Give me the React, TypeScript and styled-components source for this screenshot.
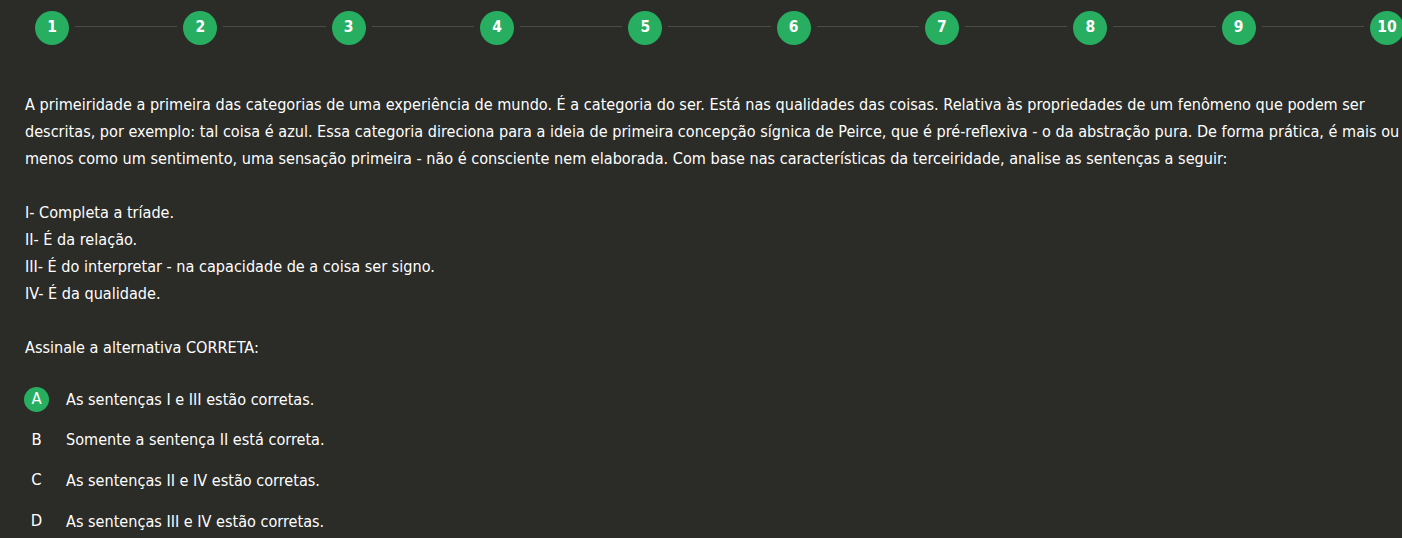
import React from "react";
import styled, { createGlobalStyle } from "styled-components";

const GlobalStyle = createGlobalStyle`
  html, body {
    margin: 0;
    padding: 0;
    background: #2b2b27;
    overflow: hidden;
  }
  body {
    font-family: "DejaVu Sans Condensed", "DejaVu Sans", sans-serif;
    color: #ffffff;
  }
`;

const Page = styled.div`
  width: 1402px;
  height: 538px;
  overflow: hidden;
  box-sizing: border-box;
  padding: 11px 0 0 25px;
`;

const Stepper = styled.div`
  display: flex;
  align-items: flex-start;
  width: 1369px;
  margin-left: 10px;
`;

const StepCircle = styled.div`
  flex: 0 0 34px;
  width: 34px;
  height: 34px;
  border-radius: 50%;
  background: #27ae60;
  color: #ffffff;
  display: flex;
  align-items: center;
  justify-content: center;
  font-family: "DejaVu Sans Condensed", "DejaVu Sans", sans-serif;
  font-weight: 700;
  font-size: 15.5px;
  line-height: 1;
`;

const StepLine = styled.div`
  flex: 1 1 auto;
  height: 1px;
  margin: 14.5px 6px 0;
  background: #4c4c47;
`;

const Body = styled.div`
  margin-top: 46px;
  font-size: 16.1px;
  line-height: 27px;
  width: 1370px;
`;

const Para = styled.p`
  margin: 0 0 27px;
  white-space: nowrap;
`;

const Options = styled.div`
  display: flex;
  flex-direction: column;
  margin-top: -9px;
`;

const OptionRow = styled.div`
  display: flex;
  align-items: center;
  height: 40.67px;
  margin-left: -1px;
`;

const Letter = styled.div<{ $selected?: boolean }>`
  flex: 0 0 25px;
  width: 25px;
  height: 25px;
  border-radius: 50%;
  background: ${(p) => (p.$selected ? "#27ae60" : "transparent")};
  display: flex;
  align-items: center;
  justify-content: center;
  font-size: 16.5px;
  line-height: 1;
  color: #ffffff;
`;

const OptionText = styled.span`
  margin-left: 17px;
  font-size: 16.1px;
`;

const steps = Array.from({ length: 10 }, (_, i) => i + 1);

const options = [
  { l: "A", t: "As sentenças I e III estão corretas.", s: true },
  { l: "B", t: "Somente a sentença II está correta." },
  { l: "C", t: "As sentenças II e IV estão corretas." },
  { l: "D", t: "As sentenças III e IV estão corretas." },
];

export default function App() {
  return (
    <>
      <GlobalStyle />
      <Page>
        <Stepper>
          {steps.map((n) => (
            <React.Fragment key={n}>
              <StepCircle>{n}</StepCircle>
              {n < 10 && <StepLine />}
            </React.Fragment>
          ))}
        </Stepper>
        <Body>
          <Para>
            A primeiridade a primeira das categorias de uma experiência de mundo. É a categoria do ser. Está nas qualidades das coisas. Relativa às propriedades de um fenômeno que podem ser
            <br />
            descritas, por exemplo: tal coisa é azul. Essa categoria direciona para a ideia de primeira concepção sígnica de Peirce, que é pré-reflexiva - o da abstração pura. De forma prática, é mais ou
            <br />
            menos como um sentimento, uma sensação primeira - não é consciente nem elaborada. Com base nas características da terceiridade, analise as sentenças a seguir:
          </Para>
          <Para>
            I- Completa a tríade.
            <br />
            II- É da relação.
            <br />
            III- É do interpretar - na capacidade de a coisa ser signo.
            <br />
            IV- É da qualidade.
          </Para>
          <Para>Assinale a alternativa CORRETA:</Para>
          <Options>
            {options.map((o) => (
              <OptionRow key={o.l}>
                <Letter $selected={o.s}>{o.l}</Letter>
                <OptionText>{o.t}</OptionText>
              </OptionRow>
            ))}
          </Options>
        </Body>
      </Page>
    </>
  );
}
